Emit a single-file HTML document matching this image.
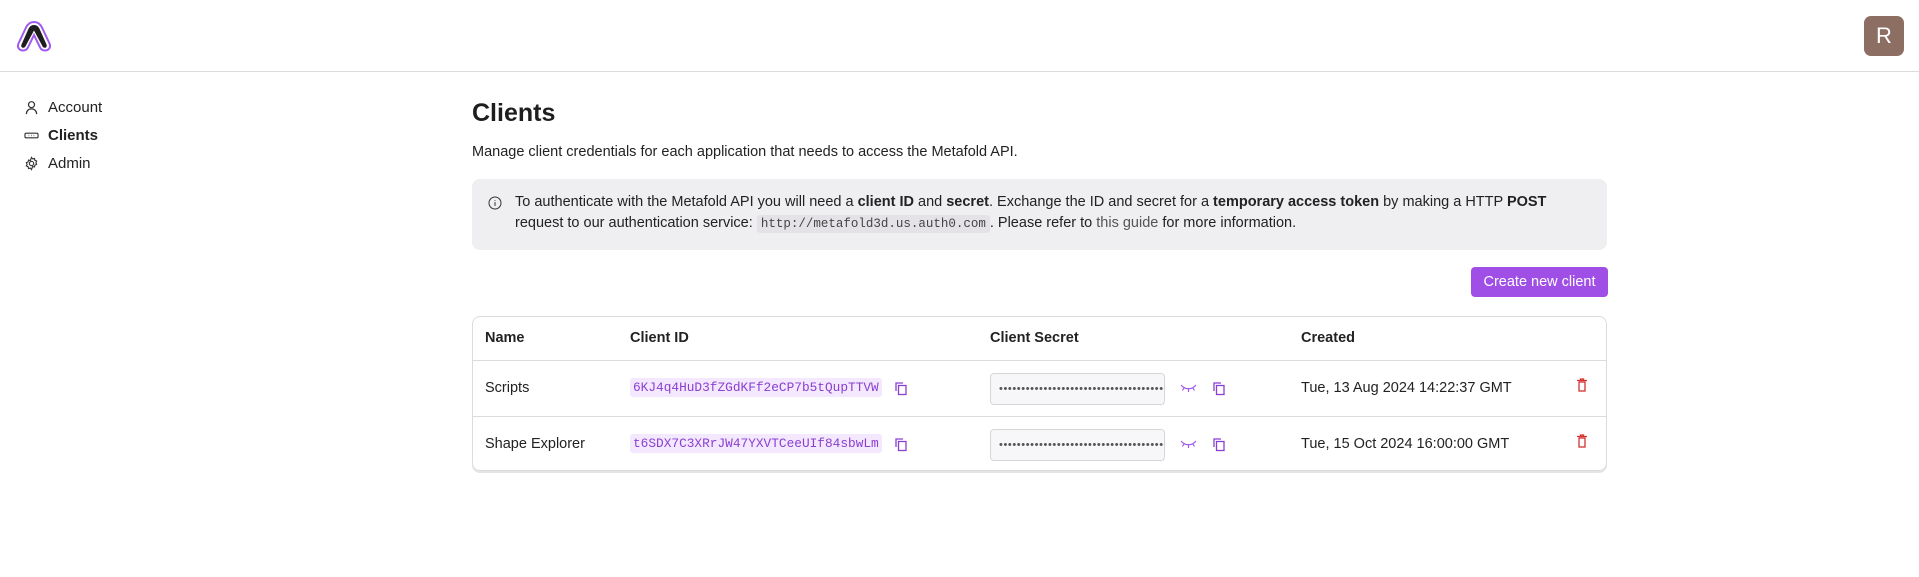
<!DOCTYPE html>
<html><head><meta charset="utf-8"><style>
*{box-sizing:border-box;margin:0;padding:0}
body{width:1919px;height:577px;background:#fff;font-family:"Liberation Sans",sans-serif;color:#222;position:relative;overflow:hidden}
.abs{position:absolute}
.hdr{left:0;top:0;width:1919px;height:72px;border-bottom:1px solid #dcdcdc}
.av{left:1864px;top:16px;width:40px;height:40px;border-radius:7px;background:#8d6e63;color:#fff;font-size:22px;text-align:center;line-height:40px}
.nav{left:24px;font-size:15px;display:flex;align-items:center;gap:9px}
.mono{font-family:"Liberation Mono",monospace}
.info{left:472px;top:179px;width:1135px;height:71px;background:#efeef0;border-radius:8px}
.info p{position:absolute;left:43px;font-size:14.5px;color:#222;white-space:nowrap}
.code{background:#e4e2e6;padding:2px 4px;border-radius:3px;font-size:12.5px;color:#444}
.btn{left:1471px;top:267px;width:137px;height:30px;background:#9f4fe6;border-radius:4px;color:#fff;font-size:14.5px;text-align:center;line-height:30px}
.tbl{left:472px;top:316px;width:1135px;height:155px;border:1px solid #dcdcdc;border-radius:8px;box-shadow:0 2px 0 #e4e4e8}
.row{position:absolute;left:0;width:1133px;border-top:1px solid #dcdcdc}
.c{position:absolute;font-size:14.5px;white-space:nowrap}
.th{font-weight:bold;top:13px}
.chip{background:#f3e8fd;color:#8a3fd1;font-size:12.8px;padding:2px 3px;border-radius:3px}
.sec{position:absolute;left:517px;width:175px;height:32px;border:1px solid #d6d6d8;background:#f7f7f9;border-radius:4px;overflow:hidden;font-size:11px;letter-spacing:0.6px;color:#555;line-height:30px;padding-left:8px;white-space:nowrap}
</style></head><body>
<div class="abs hdr"></div>
<svg class="abs" style="left:16px;top:20px" width="36" height="32" viewBox="0 0 36 32">
<path d="M18 2 C13.5 2 11.5 4.5 10 7.5 L2.5 23.5 C0.8 27.5 3.5 30.5 7 30.5 C9.8 30.5 11.2 29 12 27.3 L18 15 L24 27.3 C24.8 29 26.2 30.5 29 30.5 C32.5 30.5 35.2 27.5 33.5 23.5 L26 7.5 C24.5 4.5 22.5 2 18 2Z" fill="#fff" stroke="#a259f0" stroke-width="2"/>
<path d="M18 5 C15.3 5 13.6 6.5 12.5 8.8 L5.5 24.5 C4.7 26.5 5.8 27.8 7.2 27.8 C8.4 27.8 9.2 27 9.6 26.1 L18 10.5 L26.4 26.1 C26.8 27 27.6 27.8 28.8 27.8 C30.2 27.8 31.3 26.5 30.5 24.5 L23.5 8.8 C22.4 6.5 20.7 5 18 5Z" fill="#1d1d1d"/>
</svg>
<div class="abs av">R</div>

<div class="abs nav" style="top:99px"><svg width="15" height="15" viewBox="0 0 16 16" fill="none" stroke="#333" stroke-width="1.3"><circle cx="8" cy="5" r="3.2"/><path d="M2.5 15c0-3.5 2.5-5.5 5.5-5.5s5.5 2 5.5 5.5"/></svg>Account</div>
<div class="abs nav" style="top:127px;font-weight:bold"><svg width="15" height="15" viewBox="0 0 16 16" fill="none" stroke="#333" stroke-width="1.2"><rect x="1" y="5.5" width="14" height="5" rx="1.5"/><path d="M5 8h.5M7.7 8h.5M10.4 8h.5" stroke-width="1.5"/></svg>Clients</div>
<div class="abs nav" style="top:155px"><svg width="15" height="15" viewBox="0 0 16 16" fill="none" stroke="#333" stroke-width="1.2"><circle cx="8" cy="8" r="2.3"/><path d="M8 1.5l1.2 1.6 2-.5.4 2 1.9.8-.8 1.9.8 1.6-1.9.8-.4 2-2-.5L8 14.5l-1.2-1.6-2 .5-.4-2-1.9-.8.8-1.6-.8-1.9 1.9-.8.4-2 2 .5z"/></svg>Admin</div>

<div class="abs" style="left:472px;top:99px;font-size:25px;font-weight:bold;color:#1e1e1e">Clients</div>
<div class="abs" style="left:472px;top:144px;font-size:14.5px">Manage client credentials for each application that needs to access the Metafold API.</div>

<div class="abs info">
<svg style="position:absolute;left:16px;top:17px" width="14" height="14" viewBox="0 0 14 14" fill="none" stroke="#333" stroke-width="1"><circle cx="7" cy="7" r="6"/><path d="M7 6v4M7 4v.8"/></svg>
<p style="top:15px">To authenticate with the Metafold API you will need a <b>client ID</b> and <b>secret</b>. Exchange the ID and secret for a <b>temporary access token</b> by making a HTTP <b>POST</b></p>
<p style="top:36px">request to our authentication service: <span class="code mono">http://metafold3d.us.auth0.com</span>. Please refer to <span style="color:#555">this guide</span> for more information.</p>
</div>

<div class="abs btn">Create new client</div>

<div class="abs tbl">
<div class="c th" style="left:12px">Name</div>
<div class="c th" style="left:157px">Client ID</div>
<div class="c th" style="left:517px">Client Secret</div>
<div class="c th" style="left:828px">Created</div>

<div class="row" style="top:43px;height:56px">
<div class="c" style="left:12px;top:19px">Scripts</div>
<div class="c" style="left:157px;top:18px"><span class="chip mono">6KJ4q4HuD3fZGdKFf2eCP7b5tQupTTVW</span></div>
<svg class="c" style="left:421px;top:20px" width="14" height="15" viewBox="0 0 14 15" fill="none" stroke="#8a3fd1" stroke-width="1.3"><path d="M2 10V2h7"/><rect x="4.5" y="4.5" width="7.5" height="9"/></svg>
<div class="sec" style="top:12px">••••••••••••••••••••••••••••••••••••••••••</div>
<svg class="c" style="left:707px;top:23px" width="17" height="8" viewBox="0 0 17 8" fill="none" stroke="#a259f0" stroke-width="1.2"><path d="M1 1c4 5 11 5 15 0M4 4l-1.5 2.5M8.5 5v3M13 4l1.5 2.5"/></svg>
<svg class="c" style="left:739px;top:20px" width="14" height="15" viewBox="0 0 14 15" fill="none" stroke="#8a3fd1" stroke-width="1.3"><path d="M2 10V2h7"/><rect x="4.5" y="4.5" width="7.5" height="9"/></svg>
<div class="c" style="left:828px;top:19px">Tue, 13 Aug 2024 14:22:37 GMT</div>
<svg class="c" style="left:1103px;top:17px" width="12" height="14" viewBox="0 0 12 14" fill="none" stroke="#d32f2f" stroke-width="1.3"><path d="M1 2.5h10M4.5 2.5V1h3v1.5"/><rect x="3" y="4" width="6" height="9"/></svg>
</div>

<div class="row" style="top:99px;height:56px">
<div class="c" style="left:12px;top:19px">Shape Explorer</div>
<div class="c" style="left:157px;top:18px"><span class="chip mono">t6SDX7C3XRrJW47YXVTCeeUIf84sbwLm</span></div>
<svg class="c" style="left:421px;top:20px" width="14" height="15" viewBox="0 0 14 15" fill="none" stroke="#8a3fd1" stroke-width="1.3"><path d="M2 10V2h7"/><rect x="4.5" y="4.5" width="7.5" height="9"/></svg>
<div class="sec" style="top:12px">••••••••••••••••••••••••••••••••••••••••••</div>
<svg class="c" style="left:707px;top:23px" width="17" height="8" viewBox="0 0 17 8" fill="none" stroke="#a259f0" stroke-width="1.2"><path d="M1 1c4 5 11 5 15 0M4 4l-1.5 2.5M8.5 5v3M13 4l1.5 2.5"/></svg>
<svg class="c" style="left:739px;top:20px" width="14" height="15" viewBox="0 0 14 15" fill="none" stroke="#8a3fd1" stroke-width="1.3"><path d="M2 10V2h7"/><rect x="4.5" y="4.5" width="7.5" height="9"/></svg>
<div class="c" style="left:828px;top:19px">Tue, 15 Oct 2024 16:00:00 GMT</div>
<svg class="c" style="left:1103px;top:17px" width="12" height="14" viewBox="0 0 12 14" fill="none" stroke="#d32f2f" stroke-width="1.3"><path d="M1 2.5h10M4.5 2.5V1h3v1.5"/><rect x="3" y="4" width="6" height="9"/></svg>
</div>
</div>
</body></html>
